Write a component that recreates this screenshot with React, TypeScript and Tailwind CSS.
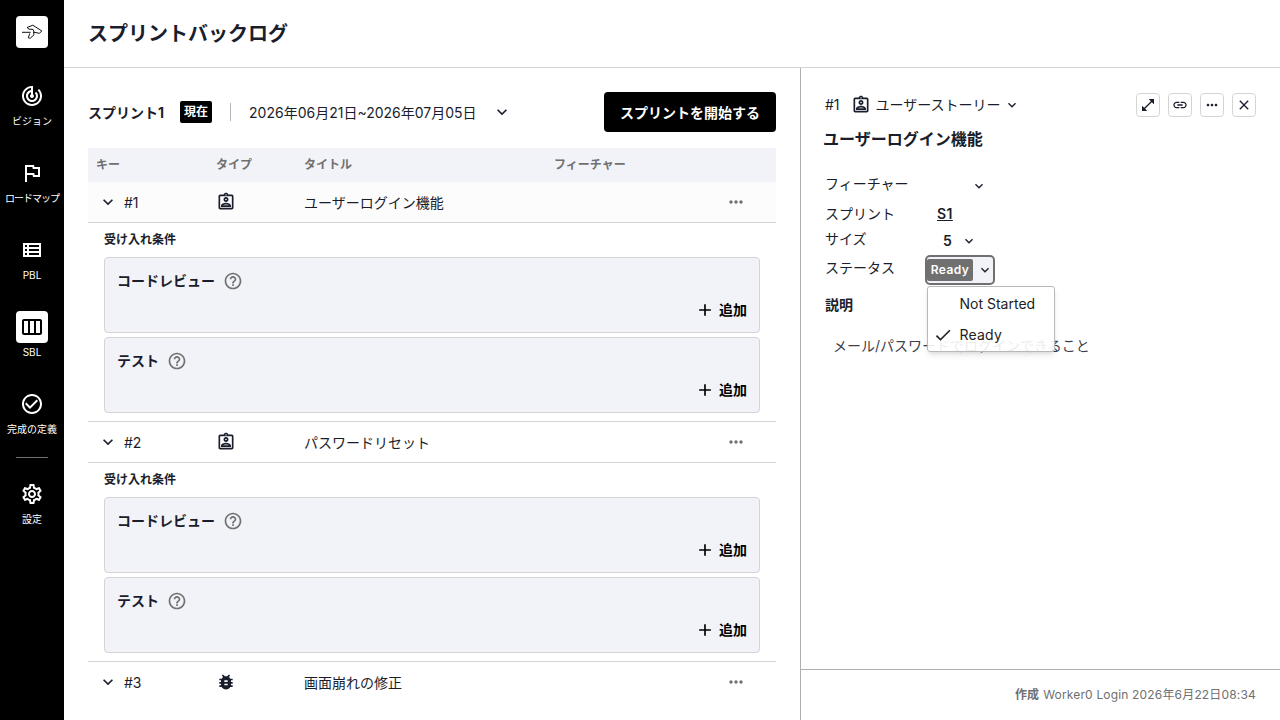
import type { ReactNode } from 'react';
import {
  MdAdd,
  MdBugReport,
  MdCheck,
  MdCheckCircleOutline,
  MdClose,
  MdExpandMore,
  MdHelpOutline,
  MdLink,
  MdMoreHoriz,
  MdOpenInFull,
  MdOutlineAssignmentInd,
  MdOutlineFlag,
  MdOutlineSettings,
  MdOutlineViewWeek,
  MdTrackChanges,
} from 'react-icons/md';

const NAV = [
  { label: 'ビジョン', icon: <MdTrackChanges size={24} /> },
  { label: 'ロードマップ', icon: <MdOutlineFlag size={24} />, tight: true },
  { label: 'PBL', icon: <ViewListIcon /> },
  { label: 'SBL', icon: <MdOutlineViewWeek size={24} />, active: true },
  { label: '完成の定義', icon: <MdCheckCircleOutline size={24} /> },
];

const ITEMS = [
  { key: '#1', type: 'story', title: 'ユーザーログイン機能', open: true, hover: true },
  { key: '#2', type: 'story', title: 'パスワードリセット', open: true },
  { key: '#3', type: 'bug', title: '画面崩れの修正' },
];

function ViewListIcon() {
  return (
    <svg width="24" height="24" viewBox="0 0 24 24" fill="currentColor">
      <path d="M3 5v14h18V5H3zm4 2v2H5V7h2zm-2 6v-2h2v2H5zm0 2h2v2H5v-2zm14 2H9v-2h10v2zm0-4H9v-2h10v2zm0-4H9V7h10v2z" />
    </svg>
  );
}

function Logo() {
  return (
    <div className="flex h-8 w-8 items-center justify-center rounded bg-white">
      <svg width="22" height="16" viewBox="0 0 22 16" fill="none" stroke="#111" strokeWidth="1">
        <path d="M1 8.3h8.6M6 3.5 11.8 1.2 20.8 6.9 18.5 9.3 12.5 8.2 13 10.8 9.2 14.3 7.3 13.8 8.7 9.5M6 3.5 8 5.2 12 5.4 13.2 8.2" />
      </svg>
    </div>
  );
}

function NavItem({ label, icon, active, tight }: { label: string; icon: ReactNode; active?: boolean; tight?: boolean }) {
  return (
    <div className="flex w-16 flex-col items-center">
      <div className={active ? 'flex h-8 w-8 items-center justify-center rounded bg-white text-black' : 'flex h-8 w-8 items-center justify-center'}>
        {icon}
      </div>
      <span className={tight ? 'text-[10px] leading-[18px] tracking-[-1px] whitespace-nowrap' : 'text-[10px] leading-[18px] whitespace-nowrap'}>
        {label}
      </span>
    </div>
  );
}

function Criteria({ title }: { title: string }) {
  return (
    <div className="flex h-[76px] flex-col justify-between rounded border border-[#d4d4d4] bg-[#f2f3f8] px-3 pt-3 pb-3">
      <div className="flex h-[22px] items-center gap-2 text-sm font-bold">
        {title}
        <MdHelpOutline size={20} className="text-[#707070]" />
      </div>
      <div className="flex h-5 items-center justify-end gap-1 text-sm font-bold text-black">
        <MdAdd size={20} />
        追加
      </div>
    </div>
  );
}

function Row({ item }: { item: (typeof ITEMS)[number] }) {
  return (
    <>
      <div className={item.hover ? 'flex h-[41px] items-center border-b border-[#d4d4d4] bg-[#fcfcfc] text-sm' : item.open ? 'flex h-[41px] items-center border-b border-[#d4d4d4] text-sm' : 'flex h-10 items-center text-sm'}>
        <div className="flex w-32 items-center gap-1.5 pl-2.5">
          <MdExpandMore size={20} />
          <span className="pt-0.5">{item.key}</span>
        </div>
        <div className="w-[88px]">
          {item.type === 'bug' ? <MdBugReport size={20} /> : <MdOutlineAssignmentInd size={20} />}
        </div>
        <div className="flex-1 pt-0.5">{item.title}</div>
        <MdMoreHoriz size={20} className="mr-[30px] text-[#707070]" />
      </div>
      {item.open && (
        <div className="flex h-[199px] flex-col gap-1 border-b border-[#d4d4d4] px-4">
          <h3 className="h-[30px] text-xs leading-[34px] font-bold">受け入れ条件</h3>
          <Criteria title="コードレビュー" />
          <Criteria title="テスト" />
        </div>
      )}
    </>
  );
}

function IconButton({ children }: { children: ReactNode }) {
  return <button className="flex h-6 w-6 items-center justify-center rounded border border-[#d4d4d4]">{children}</button>;
}

export default function App() {
  return (
    <div className="flex h-[720px] w-[1280px] overflow-hidden bg-white font-[Inter,'Noto_Sans_CJK_JP',sans-serif] text-[#1a1d2b]">
      {/* Navigation */}
      <nav className="flex w-16 shrink-0 flex-col items-center bg-black pt-4 text-white">
        <Logo />
        <div className="mt-8 flex flex-col gap-[27px]">
          {NAV.map((n) => (
            <NavItem key={n.label} {...n} />
          ))}
        </div>
        <div className="mt-[19px] mb-5 h-px w-8 bg-[#707070]" />
        <NavItem label="設定" icon={<MdOutlineSettings size={24} />} />
      </nav>

      <div className="flex min-w-0 flex-1 flex-col">
        <header className="flex h-[68px] shrink-0 items-center border-b border-[#d4d4d4] px-6">
          <h1 className="text-xl font-bold">スプリントバックログ</h1>
        </header>

        <div className="flex min-h-0 flex-1">
          {/* Sprint backlog */}
          <main className="w-[736px] shrink-0 overflow-hidden px-6 pt-6">
            <div className="flex h-10 items-center text-sm">
              <span className="pt-0.5 font-bold">スプリント1</span>
              <span className="ml-4 flex h-[22px] w-8 items-center justify-center rounded-[2px] bg-black text-xs font-bold text-white">現在</span>
              <span className="mx-[18px] h-[18px] w-px bg-[#b8b8bc]" />
              <span className="pt-0.5">2026年06月21日~2026年07月05日</span>
              <MdExpandMore size={20} className="ml-[15px]" />
              <button className="ml-auto h-10 rounded bg-black px-4 pt-0.5 font-bold text-white">スプリントを開始する</button>
            </div>

            <div className="mt-4">
              <div className="flex h-[34px] items-center bg-[#f2f3f8] pl-2 text-xs font-bold text-[#707070]">
                <span className="w-[120px]">キー</span>
                <span className="w-[88px]">タイプ</span>
                <span className="w-[250px]">タイトル</span>
                <span>フィーチャー</span>
              </div>
              {ITEMS.map((item) => (
                <Row key={item.key} item={item} />
              ))}
            </div>
          </main>

          {/* Item detail */}
          <aside className="flex flex-1 flex-col border-l border-[#b0b0b0] text-sm">
            <div className="flex-1 px-6 pt-[25px]">
              <div className="flex h-6 items-center">
                <span>#1</span>
                <MdOutlineAssignmentInd size={20} className="ml-[11px]" />
                <span className="ml-[5px]">ユーザーストーリー</span>
                <MdExpandMore size={16} className="ml-[3px]" />
                <div className="ml-auto flex gap-2">
                  <IconButton><MdOpenInFull size={16} /></IconButton>
                  <IconButton><MdLink size={16} /></IconButton>
                  <IconButton><MdMoreHoriz size={16} /></IconButton>
                  <IconButton><MdClose size={16} /></IconButton>
                </div>
              </div>
              <h2 className="mt-[10px] -ml-0.5 text-base font-bold">ユーザーログイン機能</h2>

              <div className="mt-[18px] flex h-[30px] items-center">
                <span className="w-[146px]">フィーチャー</span>
                <MdExpandMore size={16} className="mt-1" />
              </div>
              <div className="mt-0.5 flex h-[26px] items-center">
                <span className="w-28">スプリント</span>
                <span className="font-semibold tracking-[0.4px] underline">S1</span>
              </div>
              <div className="flex h-[28px] items-center">
                <span className="w-[118px] pb-1">サイズ</span>
                <span className="w-[18px] font-semibold">5</span>
                <MdExpandMore size={16} />
              </div>
              <div className="flex h-[30px] items-center">
                <span className="w-[100px] pb-1">ステータス</span>
                <div className="relative flex h-[30px] w-[70px] items-center rounded-[5px] border-2 border-[#707070] bg-[#f2f3f8]">
                  <span className="flex h-[22px] w-[46px] items-center justify-center rounded-[2px] bg-[#707070] text-xs font-semibold tracking-[0.4px] text-white">
                    Ready
                  </span>
                  <MdExpandMore size={16} className="ml-1" />
                  <div className="absolute top-[29px] left-0 z-10 h-[66px] w-32 rounded-[3px] border border-[#b8b8b8] bg-white/90 text-[#222] shadow-md">
                    <div className="flex h-8 items-center pt-px pl-[31.5px]">Not Started</div>
                    <div className="flex h-8 items-center pl-[5px]">
                      <MdCheck size={20} className="mr-[6.5px]" />
                      <span className="tracking-[0.2px]">Ready</span>
                    </div>
                  </div>
                </div>
              </div>
              <h3 className="mt-[10px] font-bold">説明</h3>
              <p className="mt-[21px] pl-2 text-[#3d404c]">メール/パスワードでログインできること</p>
            </div>
            <footer className="flex h-[51px] items-center justify-end border-t border-[#b0b0b0] px-6 text-xs text-[#707070]">
              <span className="mr-1 font-bold">作成</span>
              <span className="tracking-[0.17px]">Worker0 Login 2026年6月22日08:34</span>
            </footer>
          </aside>
        </div>
      </div>
    </div>
  );
}
